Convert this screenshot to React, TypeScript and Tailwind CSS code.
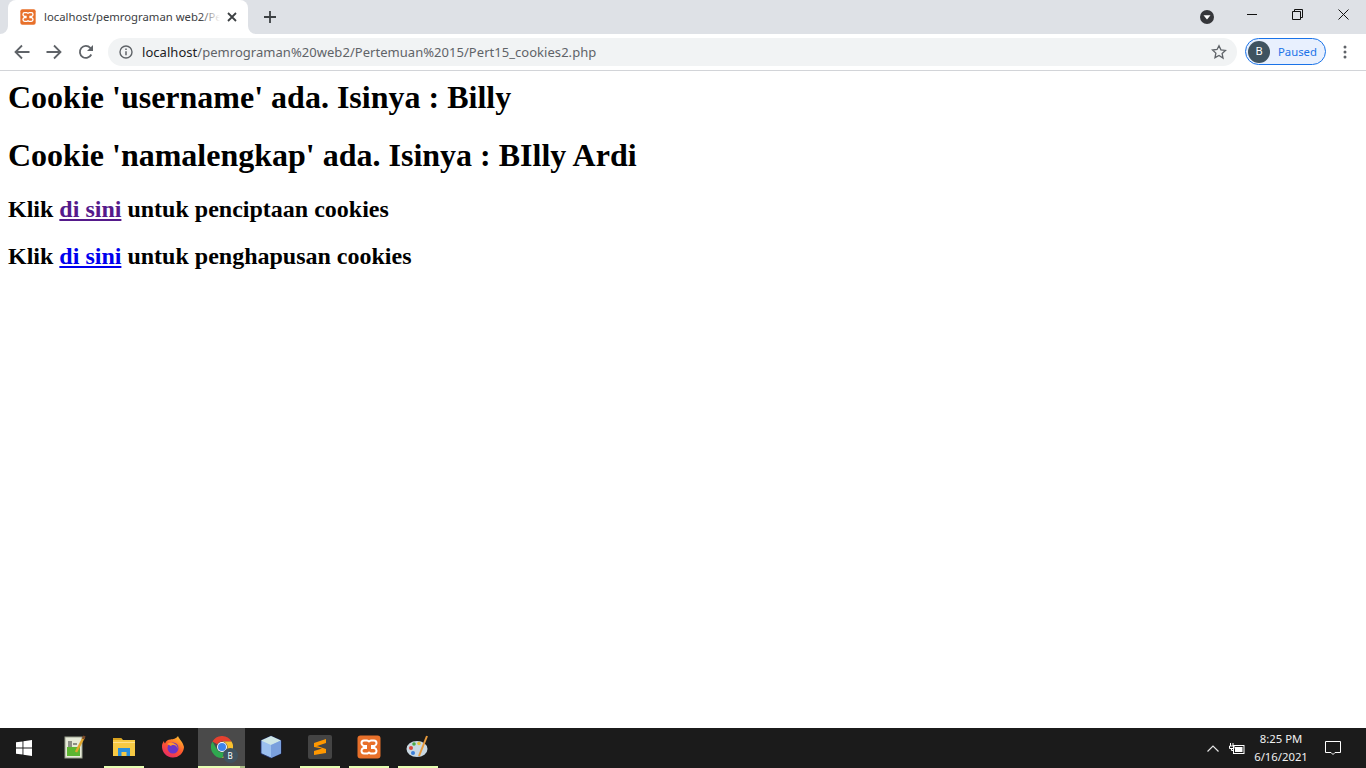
const uiFont = "font-['Noto_Sans',sans-serif]";

function XamppIcon({ size = 16 }: { size?: number }) {
  return (
    <svg width={size} height={size} viewBox="0 0 24 24">
      <rect x="0.5" y="0.5" width="23" height="23" rx="3" fill="#e8702a" />
      <path
        d="M7 5.500h3c1 0 1.400 1 2 1s1-1 2-1h3c1.700 0 2.500 1.300 2.500 2.700 0 1.500-1 2.300-2 2.800h-2.500v2h2.500c1 .5 2 1.300 2 2.800 0 1.400-.8 2.700-2.500 2.700h-3c-1 0-1.400-1-2-1s-1 1-2 1H7c-1.700 0-2.500-1.300-2.500-2.700 0-1.500 1-2.300 2-2.800H9v-2H6.500c-1-.5-2-1.300-2-2.800C4.500 6.800 5.300 5.500 7 5.500z"
        fill="none"
        stroke="#fff"
        strokeWidth="2"
      />
    </svg>
  );
}

function NavIcons() {
  return (
    <div className="flex items-center w-[108px] pl-[6px] gap-0">
      <div className="w-[32px] flex justify-center">
        <svg width="16" height="16" viewBox="0 0 16 16" fill="none" stroke="#5f6368" strokeWidth="1.800">
          <path d="M15.500 8H1.800M8 1.500 1.500 8 8 14.500" />
        </svg>
      </div>
      <div className="w-[32px] flex justify-center">
        <svg width="16" height="16" viewBox="0 0 16 16" fill="none" stroke="#5f6368" strokeWidth="1.800">
          <path d="M.5 8h13.700M8 1.500 14.500 8 8 14.500" />
        </svg>
      </div>
      <div className="w-[32px] flex justify-center">
        <svg width="16" height="16" viewBox="0 0 16 16" fill="none">
          <path d="M13.300 10.500A6 6 0 1 1 12.300 3.800L14.500 6" stroke="#5f6368" strokeWidth="1.800" />
          <path d="M15 1v6H9z" fill="#5f6368" />
        </svg>
      </div>
    </div>
  );
}

function TitleBar() {
  return (
    <div className="h-[34px] bg-[#dee1e6] flex items-end pl-[8px]">
      <div className={`relative w-[240px] h-[34px] bg-white rounded-t-[8px] flex items-center pl-[12px] ${uiFont}`}>
        {/* little flares at the foot of the tab */}
        <svg className="absolute left-[-8px] bottom-0" width="8" height="8" viewBox="0 0 8 8">
          <path d="M8 0v8H0a8 8 0 0 0 8-8z" fill="#fff" />
        </svg>
        <svg className="absolute right-[-8px] bottom-0" width="8" height="8" viewBox="0 0 8 8">
          <path d="M0 0v8h8a8 8 0 0 1-8-8z" fill="#fff" />
        </svg>
        <XamppIcon />
        <div className="relative ml-[8px] w-[176px] overflow-hidden whitespace-nowrap text-[11.3px] text-[#3c4043]">
          localhost/pemrograman web2/Pe
          <div className="absolute right-0 top-0 bottom-0 w-[20px] bg-gradient-to-r from-transparent to-white" />
        </div>
        <svg className="ml-[7px]" width="10" height="10" viewBox="0 0 10 10" stroke="#3c4043" strokeWidth="1.800">
          <path d="M1 1l8 8M9 1l-8 8" />
        </svg>
      </div>
      <div className="h-[34px] flex items-center ml-[15px]">
        <svg width="14" height="14" viewBox="0 0 14 14" stroke="#3c4043" strokeWidth="1.800">
          <path d="M7 1v12M1 7h12" />
        </svg>
      </div>
      <div className="flex-1" />
      <div className="h-[34px] flex items-center">
        <svg width="16" height="16" viewBox="0 0 16 16" className="mr-[14px]">
          <circle cx="8" cy="8" r="7" fill="#35363a" />
          <path d="M4.500 6.200h7L8 10.500z" fill="#fff" />
        </svg>
        <div className="w-[46px] self-start pt-[9px] flex justify-center">
          <svg width="10" height="10" viewBox="0 0 10 10" stroke="#111" strokeWidth="1">
            <path d="M0 5.500h10" />
          </svg>
        </div>
        <div className="w-[45px] self-start pt-[9px] flex justify-center">
          <svg width="11" height="11" viewBox="0 0 11 11" fill="none" stroke="#111" strokeWidth="1">
            <path d="M.5 2.500h8v8h-8zM2.500 2.500v-2h8v8h-2" />
          </svg>
        </div>
        <div className="w-[46px] self-start pt-[9px] flex justify-center">
          <svg width="11" height="11" viewBox="0 0 11 11" stroke="#111" strokeWidth="1">
            <path d="M.5.500l10 10M10.500.500l-10 10" />
          </svg>
        </div>
      </div>
    </div>
  );
}

function Toolbar() {
  return (
    <div className={`h-[37px] bg-white border-b border-[#d2d4d8] flex items-start pt-[4px] ${uiFont}`}>
      <div className="h-[28px] flex items-center">
        <NavIcons />
      </div>
      <div className="w-[1129px] h-[28px] rounded-full bg-[#f1f3f4] flex items-center pl-[11px] pr-[10px]">
        <svg width="14" height="14" viewBox="0 0 14 14" fill="none">
          <circle cx="7" cy="7" r="6" stroke="#5f6368" strokeWidth="1.400" />
          <path d="M7 6.200v4M7 3.500v1.500" stroke="#5f6368" strokeWidth="1.500" />
        </svg>
        <span className="ml-[9px] mt-[1px] text-[13px] tracking-[0.04px] text-[#5f6368] whitespace-nowrap">
          <span className="text-[#202124]">localhost</span>/pemrograman%20web2/Pertemuan%2015/Pert15_cookies2.php
        </span>
        <div className="flex-1" />
        <svg width="16" height="16" viewBox="0 0 24 24" fill="none" stroke="#5f6368" strokeWidth="2">
          <path d="M12 2.500l2.900 6.300 6.800.8-5 4.700 1.300 6.800L12 17.200 6 20.500l1.300-6.800-5-4.700 6.800-.8z" />
        </svg>
      </div>
      <div className="ml-[8px] w-[81px] h-[27px] rounded-full border border-[#1a73e8] bg-[#e8f0fe] flex items-center pl-[2px]">
        <div className="w-[22px] h-[22px] rounded-full bg-[#3f5360] text-white text-[11px] flex items-center justify-center">
          B
        </div>
        <span className="ml-[8px] mt-[1px] text-[11.3px] text-[#1a73e8]">Paused</span>
      </div>
      <div className="w-[38px] h-[28px] flex items-center justify-center">
        <svg width="4" height="14" viewBox="0 0 4 14" fill="#5f6368">
          <circle cx="2" cy="2" r="1.500" />
          <circle cx="2" cy="7" r="1.500" />
          <circle cx="2" cy="12" r="1.500" />
        </svg>
      </div>
    </div>
  );
}

function PageBody() {
  return (
    <div className="flex-1 bg-white p-2 text-black font-['Liberation_Serif',serif] font-bold">
      <h1 className="text-[32px] leading-[37px] mb-[21.44px]">Cookie 'username' ada. Isinya : Billy</h1>
      <h1 className="text-[32px] leading-[37px] mb-[21.44px]">Cookie 'namalengkap' ada. Isinya : BIlly Ardi</h1>
      <h2 className="text-[24px] leading-[27px] mb-[19.92px]">
        Klik{" "}
        <a href="#" className="underline text-[#551a8b]">
          di sini
        </a>{" "}
        untuk penciptaan cookies
      </h2>
      <h2 className="text-[24px] leading-[27px]">
        Klik{" "}
        <a href="#" className="underline text-[#0000ee]">
          di sini
        </a>{" "}
        untuk penghapusan cookies
      </h2>
    </div>
  );
}

function TaskCell({ children, running }: { children: React.ReactNode; running?: boolean }) {
  return (
    <div className="w-[49px] h-[40px] flex flex-col">
      <div className="flex-1 flex items-center justify-center">{children}</div>
      <div className={`ml-[5px] w-[40px] h-[2px] ${running ? "bg-[#e6ffb3]" : ""}`} />
    </div>
  );
}

function ChromeCell() {
  return (
    <div className="w-[49px] h-[40px] pl-[1px] pr-[1px]">
      <div className="h-full flex flex-col bg-[#4a4a4a]">
        <div className="flex-1 flex items-center justify-center">
          <div className="relative w-[22px] h-[22px]">
            <svg width="22" height="22" viewBox="0 0 22 22">
              <path d="M1.470 5.500A11 11 0 0 1 20.530 5.500H11a5.500 5.500 0 0 0-4.760 2.750z" fill="#e5412f" />
              <path d="M20.530 5.500A11 11 0 0 1 11 22l4.760-8.250A5.500 5.500 0 0 0 15.760 8.250 5.500 5.500 0 0 0 11 5.500z" fill="#fbc02d" />
              <path d="M11 22A11 11 0 0 1 1.470 5.500l4.770 8.250A5.500 5.500 0 0 0 15.760 13.750z" fill="#2fa84f" />
              <circle cx="11" cy="11" r="5" fill="#fff" />
              <circle cx="11" cy="11" r="4" fill="#3f84ea" />
            </svg>
            <div className="absolute right-[-5px] bottom-[-5px] w-[15px] h-[15px] rounded-full bg-[#3f5360] text-[8px] text-white flex items-center justify-center">
              B
            </div>
          </div>
        </div>
        <div className="flex h-[2px]">
          <div className="w-[42px] bg-[#e6ffb3]" />
          <div className="flex-1 bg-[#a9bc85]" />
        </div>
      </div>
    </div>
  );
}

function Taskbar() {
  return (
    <div className={`h-[40px] bg-[#1b1b1b] flex items-center text-white ${uiFont}`}>
      <div className="w-[50px] h-[40px] flex items-center justify-center pr-[2px]">
        <svg width="16" height="16" viewBox="0 0 16 16" fill="#fff">
          <path d="M0 2.300 6.500 1.400v6.100H0zM7.400 1.300 16 0v7.500H7.400zM0 8.400h6.500v6.200L0 13.700zM7.400 8.400H16V16l-8.600-1.300z" />
        </svg>
      </div>
      <TaskCell>
        <svg width="22" height="24" viewBox="0 0 22 24">
          <rect x="1" y="2" width="17" height="21" fill="#e6ead8" stroke="#9aa08e" />
          <rect x="3" y="12" width="13" height="9" fill="#5cb531" />
          <path d="M5 6v6M7 6v6M9 9h4" stroke="#333" strokeWidth="1" />
          <path d="M20 2 12 17" stroke="#e2a72e" strokeWidth="2.500" />
          <path d="M20.500 1 19 4" stroke="#7a4a2a" strokeWidth="2.500" />
        </svg>
      </TaskCell>
      <TaskCell running>
        <svg width="22" height="20" viewBox="0 0 22 20">
          <path d="M0 1h8l2 2h12v16H0z" fill="#f6c944" />
          <path d="M0 1h8l1 2H0z" fill="#d9a21f" />
          <path d="M0 5h22v1H0z" fill="#ffe08a" />
          <path d="M5 19v-8h12v8h-3.500v-4h-5v4z" fill="#2a8fdb" />
        </svg>
      </TaskCell>
      <TaskCell>
        <svg width="24" height="24" viewBox="0 0 24 24">
          <defs>
            <linearGradient id="fx" x1="0.800" y1="0" x2="0.200" y2="1">
              <stop offset="0" stopColor="#ffc22e" />
              <stop offset="0.500" stopColor="#ff5a2c" />
              <stop offset="1" stopColor="#e6256b" />
            </linearGradient>
          </defs>
          <path d="M17 1c1 3 5 6 6 11a11 11 0 1 1-22-1c0-2 1-4 2-5 0 1 .5 2 1 2.500C5 6 7 4.500 9.500 4.500 12 4 15 4 17 1z" fill="url(#fx)" />
          <circle cx="12" cy="13" r="5.500" fill="#6a35c9" />
          <path d="M6 9c3-2 6-1 8 0s3 3 2 5c1-4-5-5-6-3z" fill="#ff9a2c" />
        </svg>
      </TaskCell>
      <ChromeCell />
      <TaskCell>
        <svg width="22" height="24" viewBox="0 0 22 24">
          <path d="M11 1 21 5.500v13L11 23 1 18.500v-13z" fill="#9cc0ee" stroke="#1f2f6e" strokeWidth="0.800" />
          <path d="M11 1 21 5.500 11 10 1 5.500z" fill="#cfe6e6" />
          <path d="M11 10v13l10-4.500v-13z" fill="#7aa0dd" />
        </svg>
      </TaskCell>
      <TaskCell running>
        <div className="w-[24px] h-[24px] rounded-[2px] bg-[#444] flex items-center justify-center">
          <svg width="14" height="16" viewBox="0 0 14 16" fill="#ff9800">
            <path d="M13 0v4L1 8V4zM1 6l12 4v4L1 16v-4l8-2.500L1 8z" />
          </svg>
        </div>
      </TaskCell>
      <TaskCell running>
        <XamppIcon size={24} />
      </TaskCell>
      <TaskCell running>
        <svg width="24" height="24" viewBox="0 0 24 24">
          <ellipse cx="11" cy="14" rx="10.500" ry="8" fill="#c9d8e2" />
          <circle cx="5" cy="13" r="2" fill="#d9453a" />
          <circle cx="8" cy="9" r="1.800" fill="#4aa84a" />
          <circle cx="13" cy="8.500" r="1.800" fill="#e8c23a" />
          <circle cx="7" cy="18" r="2" fill="#3a7fd9" />
          <path d="M21 1 13 21" stroke="#e79a3c" strokeWidth="2" />
        </svg>
      </TaskCell>
      <div className="flex-1" />
      <svg width="12" height="7" viewBox="0 0 12 7" fill="none" stroke="#e6e6e6" strokeWidth="1.200">
        <path d="M.5 6.500 6 1l5.500 5.500" />
      </svg>
      <svg className="ml-[10px]" width="16" height="11" viewBox="0 0 16 11" fill="none" stroke="#fff">
        <rect x="4.500" y="2.500" width="10.500" height="8" />
        <rect x="6" y="4" width="7.500" height="5" fill="#fff" stroke="none" />
        <path d="M1.500 0v3M4 0v3M.5 3h4.500v2.500H.5zM2.500 5.500v2h2" />
      </svg>
      <div className="w-[62px] ml-[5px] flex flex-col items-center text-[11.3px] leading-[18px] text-[#f0f0f0]">
        <span>8:25 PM</span>
        <span>6/16/2021</span>
      </div>
      <div className="w-[42px] flex justify-center mr-[12px]">
        <svg width="16" height="16" viewBox="0 0 16 16" fill="none" stroke="#fff" strokeWidth="1">
          <path d="M.5 1.500h15v11H10L8 14.500 6 12.500H.5z" />
        </svg>
      </div>
    </div>
  );
}

export default function App() {
  return (
    <div className="h-[768px] w-[1366px] overflow-hidden flex flex-col">
      <TitleBar />
      <Toolbar />
      <PageBody />
      <Taskbar />
    </div>
  );
}
